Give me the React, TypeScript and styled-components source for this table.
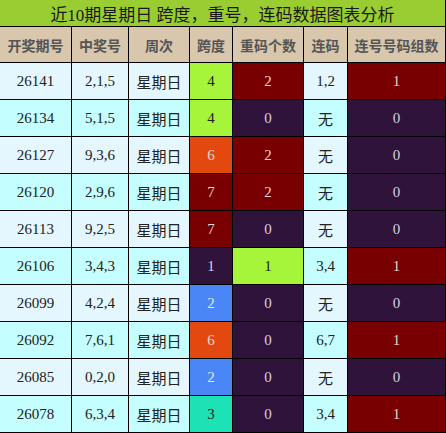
import styled, { createGlobalStyle } from "styled-components";

const GlobalStyle = createGlobalStyle`
  body {
    margin: 0;
    background: #ffffff;
    font-family: "Liberation Serif", "Noto Sans CJK SC", serif;
  }
`;

const Board = styled.div`
  display: grid;
  grid-template-columns: 72px 57px 61px 43px 71px 44px 98px;
  grid-template-rows: 27px 36px;
  grid-auto-rows: 37px;
  width: 446px;
`;

const Title = styled.div`
  grid-column: 1 / -1;
  box-sizing: border-box;
  border-right: 1px solid #000;
  border-bottom: 1px solid #000;
  background: #9acd32;
  color: #1a1a1a;
  font-size: 17px;
  display: flex;
  align-items: center;
  justify-content: center;
`;

const Head = styled.div`
  box-sizing: border-box;
  border-right: 1px solid #000;
  border-bottom: 1px solid #000;
  background: #d8c6ad;
  color: #555;
  font-family: "Noto Sans CJK SC", sans-serif;
  font-weight: 700;
  font-size: 14px;
  display: flex;
  align-items: center;
  justify-content: center;
`;

const tones: Record<string, { bg: string; fg: string }> = {
  light: { bg: "#e4f6fe", fg: "#222" },
  cyan: { bg: "#c4fefe", fg: "#222" },
  green: { bg: "#a6f53a", fg: "#222" },
  red: { bg: "#780000", fg: "#e8d6d6" },
  purple: { bg: "#30133a", fg: "#dccfe0" },
  orange: { bg: "#e3480f", fg: "#f2dccd" },
  blue: { bg: "#4a86f5", fg: "#e0e8f8" },
  teal: { bg: "#1de2b5", fg: "#222" },
};

const Cell = styled.div<{ $tone: string }>`
  box-sizing: border-box;
  border-right: 1px solid #000;
  border-bottom: 1px solid #000;
  background: ${(p) => tones[p.$tone].bg};
  color: ${(p) => tones[p.$tone].fg};
  font-size: 15px;
  display: flex;
  align-items: center;
  justify-content: center;
`;

const CjkText = styled.span`
  font-family: "Noto Sans CJK SC", sans-serif;
  font-size: 15px;
`;

const headers = ["开奖期号", "中奖号", "周次", "跨度", "重码个数", "连码", "连号号码组数"];

type Row = [string, string, number, string, number, string, string, number, string];

// issue, numbers, span, span tone, repeat, repeat tone, link, groups, groups tone
const rows: Row[] = [
  ["26141", "2,1,5", 4, "green", 2, "red", "1,2", 1, "red"],
  ["26134", "5,1,5", 4, "green", 0, "purple", "无", 0, "purple"],
  ["26127", "9,3,6", 6, "orange", 2, "red", "无", 0, "purple"],
  ["26120", "2,9,6", 7, "red", 2, "red", "无", 0, "purple"],
  ["26113", "9,2,5", 7, "red", 0, "purple", "无", 0, "purple"],
  ["26106", "3,4,3", 1, "purple", 1, "green", "3,4", 1, "red"],
  ["26099", "4,2,4", 2, "blue", 0, "purple", "无", 0, "purple"],
  ["26092", "7,6,1", 6, "orange", 0, "purple", "6,7", 1, "red"],
  ["26085", "0,2,0", 2, "blue", 0, "purple", "无", 0, "purple"],
  ["26078", "6,3,4", 3, "teal", 0, "purple", "3,4", 1, "red"],
];

export default function App() {
  return (
    <>
      <GlobalStyle />
      <Board>
        <Title>近10期星期日 跨度，重号，连码数据图表分析</Title>
        {headers.map((h) => (
          <Head key={h}>{h}</Head>
        ))}
        {rows.map((r, i) => {
          const base = i % 2 === 0 ? "light" : "cyan";
          return [
            <Cell key={r[0] + "a"} $tone={base}>{r[0]}</Cell>,
            <Cell key={r[0] + "b"} $tone={base}>{r[1]}</Cell>,
            <Cell key={r[0] + "c"} $tone={base}>
              <CjkText>星期日</CjkText>
            </Cell>,
            <Cell key={r[0] + "d"} $tone={r[3]}>{r[2]}</Cell>,
            <Cell key={r[0] + "e"} $tone={r[5]}>{r[4]}</Cell>,
            <Cell key={r[0] + "f"} $tone={base}>
              {r[6] === "无" ? <CjkText>无</CjkText> : r[6]}
            </Cell>,
            <Cell key={r[0] + "g"} $tone={r[8]}>{r[7]}</Cell>,
          ];
        })}
      </Board>
    </>
  );
}
